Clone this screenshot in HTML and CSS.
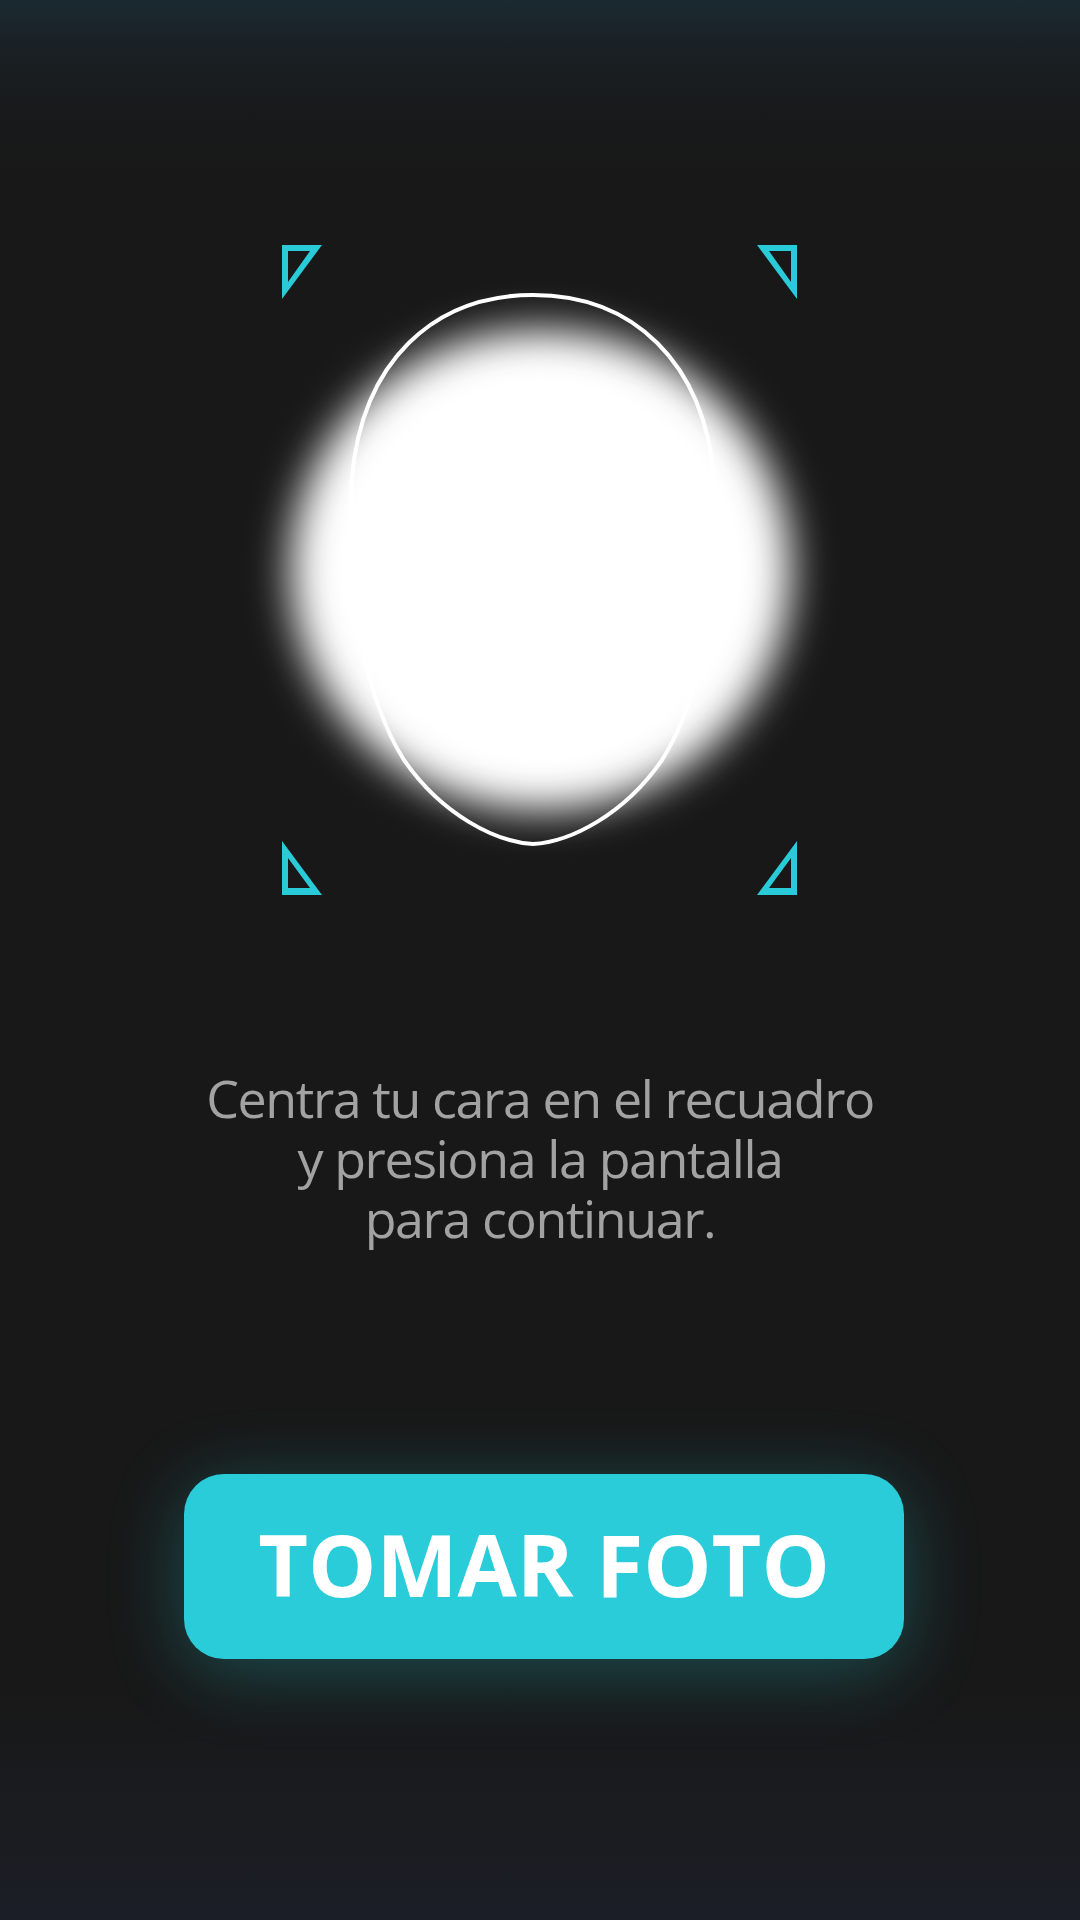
FILE: index.html
```html
<!DOCTYPE html>
<html lang="es">
<head>
<meta charset="utf-8">
<title>Tomar foto</title>
<link rel="stylesheet" href="styles.css">
</head>
<body>
<main class="screen">
  <svg class="viewfinder" width="1080" height="940" viewBox="0 0 1080 940" xmlns="http://www.w3.org/2000/svg">
    <defs>
      <filter id="blur" x="-30%" y="-30%" width="160%" height="160%">
        <feGaussianBlur stdDeviation="21"/>
      </filter>
    </defs>
    <ellipse class="glow" cx="541" cy="570" rx="250" ry="240" filter="url(#blur)"/>
    <path class="face" d="M533 295 C 633 295 704 362 714 478 C 722 590 700 700 662 760 C 624 815 570 842 533 844 C 496 842 442 815 404 760 C 366 700 344 590 352 478 C 362 362 433 295 533 295 Z"/>
    <g class="corners">
      <path d="M282 245 H322 L282 299 Z M288 251 V282 L310 251 Z"/>
      <path d="M757 245 H797 V299 Z M769 251 L791 282 V251 Z"/>
      <path d="M282 841 V895 H322 Z M288 858 V888 H310 Z"/>
      <path d="M797 841 V895 H757 Z M791 858 V888 H769 Z"/>
    </g>
  </svg>

  <p class="hint">Centra tu cara en el recuadro<br>y presiona la pantalla<br>para continuar.</p>

  <button class="shoot" type="button">TOMAR FOTO</button>
</main>
</body>
</html>
```

FILE: styles.css
```css
html, body {
  margin: 0;
  padding: 0;
}

body {
  width: 1080px;
  height: 1920px;
  overflow: hidden;
  background: linear-gradient(180deg,
    #1a2a31 0px,
    #1a2024 50px,
    #181a1b 110px,
    #181818 170px,
    #181818 1690px,
    #1a1c20 1820px,
    #1b1e26 1920px);
  font-family: "Open Sans", "Noto Sans", "Liberation Sans", sans-serif;
}

.screen {
  width: 1080px;
  height: 1920px;
  display: flex;
  flex-direction: column;
  align-items: center;
}

.viewfinder {
  display: block;
  flex: none;
}

.glow {
  fill: #ffffff;
}

.face {
  fill: none;
  stroke: #ffffff;
  stroke-width: 4;
}

.corners path {
  fill: #29cbd8;
  fill-rule: evenodd;
}

.hint {
  margin: 128px 0 0;
  font-size: 52px;
  line-height: 60px;
  letter-spacing: -1.4px;
  color: #a2a2a2;
  text-align: center;
  font-weight: 400;
}

.shoot {
  margin: 226px 0 0 8px;
  width: 720px;
  height: 185px;
  border: 0;
  border-radius: 40px;
  background: #29ccd8;
  color: #ffffff;
  font-family: "Open Sans", "Noto Sans", "Liberation Sans", sans-serif;
  font-weight: 700;
  font-size: 86px;
  letter-spacing: 0px;
  padding: 0 0 6px;
  box-shadow: 0 12px 75px rgba(41, 204, 216, 0.3);
  display: flex;
  align-items: center;
  justify-content: center;
}
```
